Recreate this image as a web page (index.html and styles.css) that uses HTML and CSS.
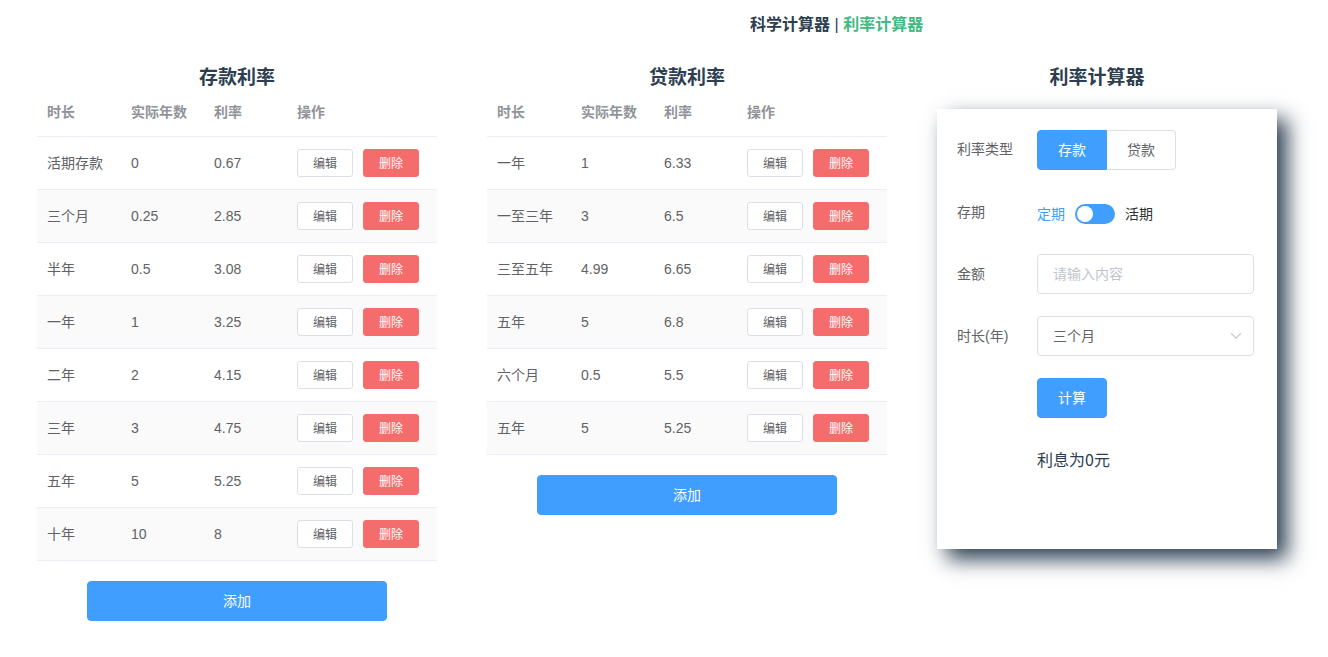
FILE: index.html
```html
<!DOCTYPE html>
<html lang="zh-CN">
<head>
<meta charset="utf-8">
<meta name="viewport" content="width=device-width, initial-scale=1">
<title>利率计算器</title>
<link rel="stylesheet" href="styles.css">
</head>
<body>
<nav class="nav">
  <a class="nav-link" href="#science">科学计算器</a> | <a class="nav-link active" href="#rate">利率计算器</a>
</nav>
<main class="columns">
  <section class="rates">
    <h3 class="title">存款利率</h3>
    <table class="table">
      <colgroup><col><col class="col-value"><col class="col-value"><col class="col-actions"></colgroup>
      <thead><tr><th>时长</th><th>实际年数</th><th>利率</th><th>操作</th></tr></thead>
      <tbody>
        <tr><td>活期存款</td><td>0</td><td>0.67</td><td><div class="actions"><button class="btn small">编辑</button><button class="btn small danger">删除</button></div></td></tr>
        <tr><td>三个月</td><td>0.25</td><td>2.85</td><td><div class="actions"><button class="btn small">编辑</button><button class="btn small danger">删除</button></div></td></tr>
        <tr><td>半年</td><td>0.5</td><td>3.08</td><td><div class="actions"><button class="btn small">编辑</button><button class="btn small danger">删除</button></div></td></tr>
        <tr><td>一年</td><td>1</td><td>3.25</td><td><div class="actions"><button class="btn small">编辑</button><button class="btn small danger">删除</button></div></td></tr>
        <tr><td>二年</td><td>2</td><td>4.15</td><td><div class="actions"><button class="btn small">编辑</button><button class="btn small danger">删除</button></div></td></tr>
        <tr><td>三年</td><td>3</td><td>4.75</td><td><div class="actions"><button class="btn small">编辑</button><button class="btn small danger">删除</button></div></td></tr>
        <tr><td>五年</td><td>5</td><td>5.25</td><td><div class="actions"><button class="btn small">编辑</button><button class="btn small danger">删除</button></div></td></tr>
        <tr><td>十年</td><td>10</td><td>8</td><td><div class="actions"><button class="btn small">编辑</button><button class="btn small danger">删除</button></div></td></tr>
      </tbody>
    </table>
    <button class="btn primary add">添加</button>
  </section>
  <section class="rates">
    <h3 class="title">贷款利率</h3>
    <table class="table">
      <colgroup><col><col class="col-value"><col class="col-value"><col class="col-actions"></colgroup>
      <thead><tr><th>时长</th><th>实际年数</th><th>利率</th><th>操作</th></tr></thead>
      <tbody>
        <tr><td>一年</td><td>1</td><td>6.33</td><td><div class="actions"><button class="btn small">编辑</button><button class="btn small danger">删除</button></div></td></tr>
        <tr><td>一至三年</td><td>3</td><td>6.5</td><td><div class="actions"><button class="btn small">编辑</button><button class="btn small danger">删除</button></div></td></tr>
        <tr><td>三至五年</td><td>4.99</td><td>6.65</td><td><div class="actions"><button class="btn small">编辑</button><button class="btn small danger">删除</button></div></td></tr>
        <tr><td>五年</td><td>5</td><td>6.8</td><td><div class="actions"><button class="btn small">编辑</button><button class="btn small danger">删除</button></div></td></tr>
        <tr><td>六个月</td><td>0.5</td><td>5.5</td><td><div class="actions"><button class="btn small">编辑</button><button class="btn small danger">删除</button></div></td></tr>
        <tr><td>五年</td><td>5</td><td>5.25</td><td><div class="actions"><button class="btn small">编辑</button><button class="btn small danger">删除</button></div></td></tr>
      </tbody>
    </table>
    <button class="btn primary add">添加</button>
  </section>
  <section class="calculator">
    <h3 class="title">利率计算器</h3>
    <form class="card">
      <div class="row row-type">
        <span class="label" id="type-label">利率类型</span>
        <div class="segments" role="radiogroup" aria-labelledby="type-label">
          <label class="segment"><input class="segment-input" type="radio" name="type" checked>存款</label>
          <label class="segment"><input class="segment-input" type="radio" name="type">贷款</label>
        </div>
      </div>
      <div class="row">
        <label class="label" for="term">存期</label>
        <div class="switch-group">
          <span class="switch-on">定期</span>
          <input class="switch" id="term" type="checkbox" role="switch">
          <span class="switch-off">活期</span>
        </div>
      </div>
      <div class="row">
        <label class="label" for="amount">金额</label>
        <input class="field" id="amount" type="text" placeholder="请输入内容">
      </div>
      <div class="row">
        <label class="label" for="duration">时长(年)</label>
        <div class="select-box">
          <select class="field" id="duration"><option>三个月</option><option>半年</option><option>一年</option><option>二年</option><option>三年</option><option>五年</option><option>十年</option></select>
          <svg class="chevron" viewBox="0 0 12 8" aria-hidden="true"><path d="M1 1.2 6 6.2 11 1.2"/></svg>
        </div>
      </div>
      <div class="row"><span class="label"></span><button class="btn primary" type="button">计算</button></div>
      <div class="row"><span class="label"></span><output class="result">利息为0元</output></div>
    </form>
  </section>
</main>
</body>
</html>
```
FILE: styles.css
```css
* { box-sizing: border-box; }

body {
  margin: 0;
  background: #fff;
  color: #2c3e50;
  font-family: "Liberation Sans", "Noto Sans CJK SC", sans-serif;
  font-size: 16px;
}

button, input, select { font-family: inherit; }

.nav {
  padding: 13px 0 12px 26%;
  text-align: center;
  line-height: 24px;
}

.nav-link {
  color: #2c3e50;
  font-weight: 700;
  text-decoration: none;
}

.nav-link.active { color: #42b983; }

.columns {
  display: grid;
  grid-template-columns: 20fr 20fr 17fr;
  gap: 50px;
  align-items: start;
  padding: 17px 51px 36px 37px;
}

.title {
  margin: 0;
  font-size: 19px;
  line-height: 23px;
  text-align: center;
}

.rates {
  display: flex;
  flex-direction: column;
}

.table {
  width: 100%;
  table-layout: fixed;
  border-collapse: separate;
  border-spacing: 0;
  color: #606266;
  font-size: 14px;
  line-height: 23px;
}

.col-value { width: 83px; }
.col-actions { width: 150px; }

.table th, .table td {
  padding: 12px 10px;
  border-bottom: 1px solid #ebeef5;
  text-align: left;
  white-space: nowrap;
}

.table th { color: #909399; }
.table tbody tr:nth-child(even) { background: #fafafa; }

.actions {
  display: flex;
  gap: 10px;
}

.btn {
  height: 40px;
  padding: 0 20px 2px;
  border: 1px solid #dcdfe6;
  border-radius: 4px;
  background: #fff;
  color: #606266;
  font-size: 14px;
  font-weight: 400;
  cursor: pointer;
}

.btn.small {
  height: 28px;
  padding: 0 15px 2px;
  border-radius: 3px;
  font-size: 12px;
}

.btn.primary {
  border-color: #409eff;
  background: #409eff;
  color: #fff;
}

.btn.danger {
  border-color: #f56c6c;
  background: #f56c6c;
  color: #fff;
}

.add {
  width: 75%;
  margin: 20px auto 0;
}

.calculator .title { padding-right: 20px; }

.card {
  min-height: 440px;
  margin-top: 20px;
  padding: 20px 23px 20px 20px;
  background: #fff;
  box-shadow: 10px 10px 20px #2c3e50;
}

.row {
  display: flex;
  min-height: 40px;
  margin-bottom: 22px;
}

.row-type .segments { margin-top: 1px; }

.label {
  flex: 0 0 80px;
  color: #606266;
  font-size: 14px;
  line-height: 40px;
}

.segments { display: flex; }

.segment {
  padding: 0 20px;
  border: 1px solid #dcdfe6;
  border-left: 0;
  border-radius: 0 4px 4px 0;
  color: #606266;
  font-size: 14px;
  line-height: 38px;
  cursor: pointer;
}

.segment:first-child {
  border-left: 1px solid #dcdfe6;
  border-radius: 4px 0 0 4px;
}

.segment:has(:checked) {
  border-color: #409eff;
  background: #409eff;
  color: #fff;
}

.segment-input {
  position: absolute;
  opacity: 0;
  pointer-events: none;
}

.switch-group {
  display: flex;
  align-items: center;
  gap: 10px;
  padding-top: 4px;
  font-size: 14px;
  line-height: 20px;
}

.switch-on { color: #409eff; }
.switch-off { color: #303133; }

.switch {
  display: flex;
  align-items: center;
  width: 40px;
  height: 20px;
  margin: 0;
  padding: 0 2px;
  border-radius: 10px;
  background: #409eff;
  appearance: none;
  cursor: pointer;
}

.switch::before {
  width: 16px;
  height: 16px;
  border-radius: 50%;
  background: #fff;
  content: "";
}

.switch:checked { justify-content: flex-end; }

.field {
  width: 100%;
  min-width: 0;
  height: 40px;
  padding: 0 15px;
  border: 1px solid #dcdfe6;
  border-radius: 4px;
  background: #fff;
  color: #606266;
  font-size: 14px;
  appearance: none;
}

.field::placeholder { color: #c0c4cc; }

.select-box {
  position: relative;
  flex: 1;
}

.chevron {
  position: absolute;
  top: 16px;
  right: 12px;
  width: 12px;
  height: 8px;
  fill: none;
  stroke: #c0c4cc;
  stroke-width: 1.1;
  pointer-events: none;
}

.result {
  font-family: "Noto Sans CJK SC", sans-serif;
  line-height: 38px;
}
```
